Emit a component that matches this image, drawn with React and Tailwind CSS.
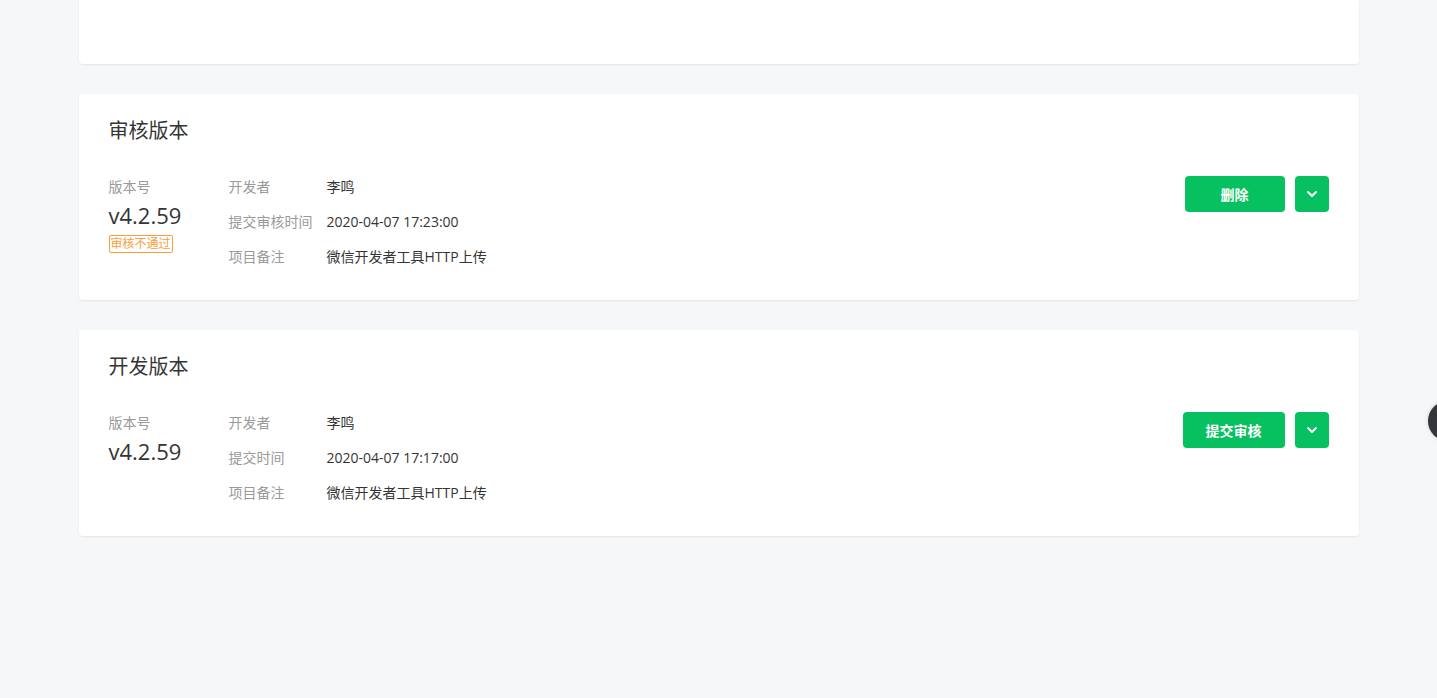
import React from 'react';

const Chevron = () => (
  <svg width="12" height="8" viewBox="0 0 12 8" fill="none">
    <path d="M2 2l4 4 4-4" stroke="#fff" strokeWidth="2" strokeLinecap="round" strokeLinejoin="round" />
  </svg>
);

const VersionCard = ({ title, version, badge, rows, action, actionWidth }) => (
  <div className="bg-white rounded-[4px] shadow-[0_1px_2px_rgba(0,0,0,0.08)] px-[30px] pt-[22px] pb-[32px]">
    <h2 className="text-[20px] leading-[30px] text-[#353535] font-normal">{title}</h2>
    <div className="mt-[30px] flex items-start">
      {/* 版本号 */}
      <div className="w-[120px] shrink-0">
        <div className="text-[14px] leading-[22px] text-[#9a9a9a]">版本号</div>
        <div className="text-[22px] leading-[30px] text-[#353535] mt-[2px]">{version}</div>
        {badge && (
          <span className="inline-block mt-[3px] border border-[#fa9d3b] text-[#fa9d3b] text-[12px] leading-[16px] px-[1px] rounded-[2px]">
            {badge}
          </span>
        )}
      </div>
      {/* 详细信息 */}
      <div className="flex flex-col gap-[13px]">
        {rows.map(([k, v]) => (
          <div key={k} className="flex text-[14px] leading-[22px]">
            <span className="w-[98px] shrink-0 text-[#9a9a9a]">{k}</span>
            <span className="text-[#353535]">{v}</span>
          </div>
        ))}
      </div>
      <div className="ml-auto flex gap-[10px]">
        <button className={`${actionWidth} h-[36px] rounded-[4px] bg-[#07c160] text-white text-[14px] font-bold`}>
          {action}
        </button>
        <button className="w-[34px] h-[36px] rounded-[4px] bg-[#07c160] flex items-center justify-center">
          <Chevron />
        </button>
      </div>
    </div>
  </div>
);

export default function App() {
  return (
    <div
      className="min-h-screen bg-[#f6f7f9] relative overflow-hidden"
      style={{ fontFamily: '"Open Sans", "Noto Sans CJK SC", sans-serif' }}
    >
      <div className="w-[1280px] mx-auto flex flex-col gap-[30px] pb-[162px]">
        <div className="h-[64px] bg-white rounded-b-[4px] shadow-[0_1px_2px_rgba(0,0,0,0.08)]" />
        <VersionCard
          title="审核版本"
          version="v4.2.59"
          badge="审核不通过"
          rows={[
            ['开发者', '李鸣'],
            ['提交审核时间', '2020-04-07 17:23:00'],
            ['项目备注', '微信开发者工具HTTP上传'],
          ]}
          action="删除"
          actionWidth="w-[100px]"
        />
        <VersionCard
          title="开发版本"
          version="v4.2.59"
          rows={[
            ['开发者', '李鸣'],
            ['提交时间', '2020-04-07 17:17:00'],
            ['项目备注', '微信开发者工具HTTP上传'],
          ]}
          action="提交审核"
          actionWidth="w-[102px]"
        />
      </div>
      {/* 悬浮按钮 */}
      <div className="absolute left-[1428px] top-[401px] w-[40px] h-[40px] rounded-full bg-[#34363c] shadow-[0_0_4px_rgba(0,0,0,0.15)]" />
    </div>
  );
}
